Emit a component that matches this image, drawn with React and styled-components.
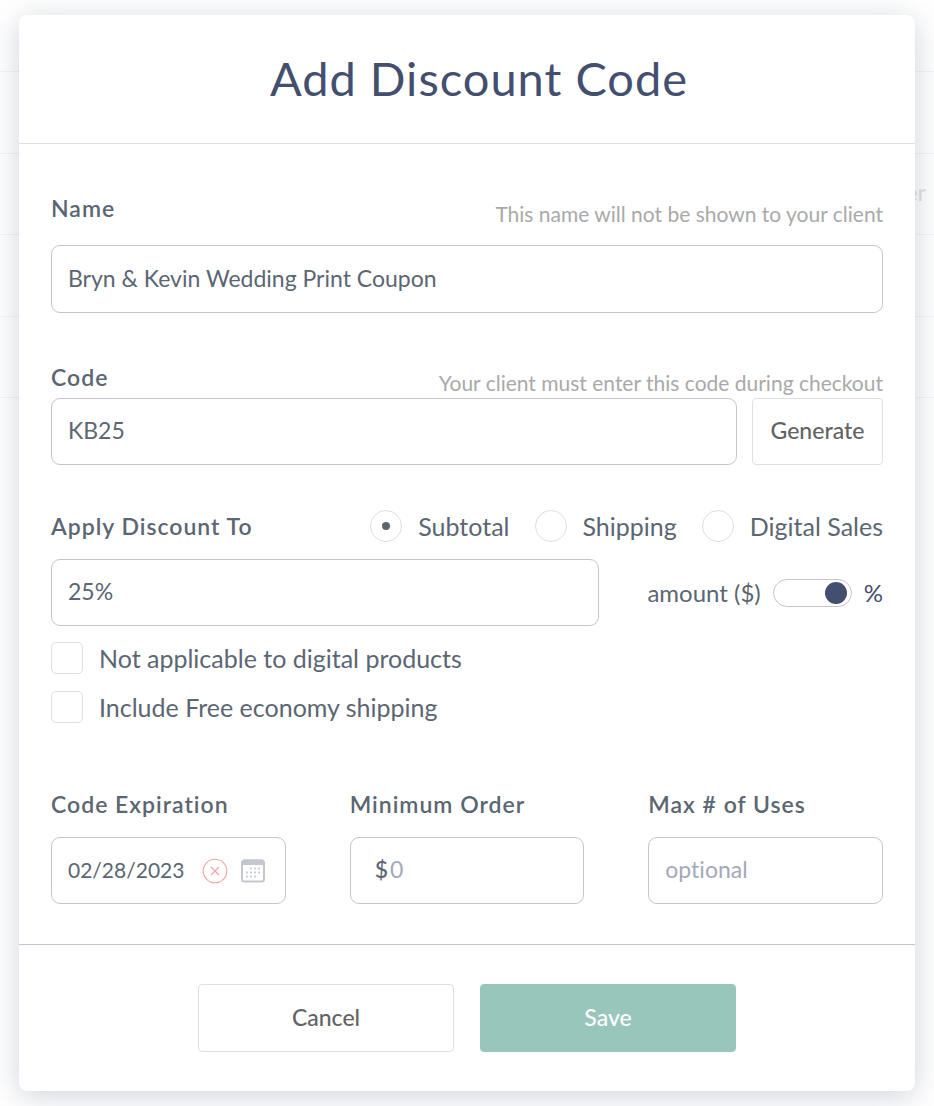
import React, { useState } from 'react'
import styled, { createGlobalStyle } from 'styled-components'

const colors = {
  navy: '#434f6f',
  text: '#5b6673',
  hint: '#a9a9a9',
  button: '#636363',
  border: '#c5c5cf',
  lightBorder: '#dedfe1',
  placeholder: '#a3a9bb',
  green: '#98c6bb',
  danger: '#f4a3a3',
}

const targets = ['Subtotal', 'Shipping', 'Digital Sales']

const App = () => {
  const [name, setName] = useState('Bryn & Kevin Wedding Print Coupon')
  const [code, setCode] = useState('KB25')
  const [target, setTarget] = useState('Subtotal')
  const [discount, setDiscount] = useState('25%')
  const [percent, setPercent] = useState(true)
  const [expiration, setExpiration] = useState('02/28/2023')

  return (
    <Page>
      <GlobalStyle />
      <Behind aria-hidden="true">
        <BehindRow />
        <BehindRow />
        <BehindRow>er</BehindRow>
        <BehindRow />
        <BehindRow />
      </Behind>
      <Modal role="dialog" aria-labelledby="modal-title">
        <Header>
          <Title id="modal-title">Add Discount Code</Title>
        </Header>

        <Body>
          <FieldHead $gap={16}>
            <Label htmlFor="name">Name</Label>
            <Hint>This name will not be shown to your client</Hint>
          </FieldHead>
          <TextInput id="name" $tall value={name} onChange={(e) => setName(e.target.value)} />

          <Section>
            <FieldHead>
              <Label htmlFor="code">Code</Label>
              <Hint>Your client must enter this code during checkout</Hint>
            </FieldHead>
            <CodeRow>
              <TextInput id="code" value={code} onChange={(e) => setCode(e.target.value)} />
              <GenerateButton type="button">Generate</GenerateButton>
            </CodeRow>
          </Section>

          <Section>
            <ApplyRow>
              <Label htmlFor="discount">Apply Discount To</Label>
              <RadioGroup>
                {targets.map((item) => (
                  <Choice key={item}>
                    <Radio
                      type="radio"
                      name="target"
                      checked={target === item}
                      onChange={() => setTarget(item)}
                    />
                    {item}
                  </Choice>
                ))}
              </RadioGroup>
            </ApplyRow>
            <DiscountRow>
              <TextInput id="discount" value={discount} onChange={(e) => setDiscount(e.target.value)} />
              <SwitchLabel>
                amount ($)
                <Switch
                  type="checkbox"
                  role="switch"
                  checked={percent}
                  onChange={() => setPercent(!percent)}
                />
                <Percent>%</Percent>
              </SwitchLabel>
            </DiscountRow>
            <CheckList>
              <Choice>
                <Checkbox type="checkbox" />
                Not applicable to digital products
              </Choice>
              <Choice>
                <Checkbox type="checkbox" />
                Include Free economy shipping
              </Choice>
            </CheckList>
          </Section>

          <Limits>
            <LimitField>
              <Label htmlFor="expiration">Code Expiration</Label>
              <InputBox>
                <BareInput
                  id="expiration"
                  $small
                  value={expiration}
                  onChange={(e) => setExpiration(e.target.value)}
                />
                <IconButton type="button" aria-label="Clear date" onClick={() => setExpiration('')}>
                  <ClearIcon />
                </IconButton>
                <IconButton type="button" aria-label="Open calendar">
                  <CalendarIcon />
                </IconButton>
              </InputBox>
            </LimitField>
            <LimitField>
              <Label htmlFor="minimum">Minimum Order</Label>
              <InputBox $indent>
                <Currency>$</Currency>
                <BareInput id="minimum" placeholder="0" />
              </InputBox>
            </LimitField>
            <LimitField>
              <Label htmlFor="uses">Max # of Uses</Label>
              <TextInput id="uses" placeholder="optional" />
            </LimitField>
          </Limits>
        </Body>

        <Footer>
          <FooterButton type="button">Cancel</FooterButton>
          <FooterButton type="button" $primary>Save</FooterButton>
        </Footer>
      </Modal>
    </Page>
  )
}

export default App

const ClearIcon = () => (
  <svg width="26" height="26" viewBox="0 0 26 26" fill="none" stroke={colors.danger}>
    <circle cx="13" cy="13" r="11.8" strokeWidth="1.1" />
    <path d="M9 9l8 8M17 9l-8 8" strokeWidth="1.1" />
  </svg>
)

const dots = [
  [10, 9.5], [14, 9.5], [18, 9.5],
  [6, 13.5], [10, 13.5], [14, 13.5], [18, 13.5],
  [6, 17.5], [10, 17.5], [14, 17.5],
]

const CalendarIcon = () => (
  <svg width="24" height="24" viewBox="0 0 24 24">
    <rect x="1" y="1.5" width="22" height="21" rx="2.5" fill="none" stroke="#c5c7cf" strokeWidth="2" />
    <path d="M0.5 3.5a3 3 0 0 1 3-3h17a3 3 0 0 1 3 3V6H0.5z" fill="#c5c7cf" />
    {dots.map(([x, y]) => (
      <rect key={`${x}-${y}`} x={x - 1} y={y - 1} width="2" height="2" fill="#cfd1d8" />
    ))}
  </svg>
)

const GlobalStyle = createGlobalStyle`
  * {
    box-sizing: border-box;
  }
  body {
    margin: 0;
    background: #ffffff;
    color: ${colors.text};
    font-family: Lato, 'Open Sans', sans-serif;
    font-size: 23px;
    font-variant-ligatures: none;
  }
  input, button {
    font: inherit;
    font-variant-ligatures: none;
    margin: 0;
  }
`

const Page = styled.div`
  position: relative;
  overflow: hidden;
  padding: 15px 19px;
`

/* the list that stays visible around the dialog */
const Behind = styled.div`
  position: absolute;
  inset: 0;
`

const BehindRow = styled.div`
  display: flex;
  align-items: center;
  justify-content: flex-end;
  height: 81px;
  padding: 0 8px 4px 0;
  border-bottom: 1px solid #f4f4f6;
  color: #dfe0e3;

  &:nth-child(even) {
    height: 82px;
  }

  &:first-child {
    height: 72px;
  }
`

const Modal = styled.div`
  position: relative;
  background: #ffffff;
  border-radius: 8px;
  box-shadow: 0 5px 30px rgba(67, 79, 111, 0.25);
`

const Header = styled.div`
  display: flex;
  justify-content: center;
  align-items: center;
  height: 129px;
  padding: 0 0 2px 24px;
  border-bottom: 1px solid ${colors.lightBorder};
`

const Title = styled.h1`
  margin: 0;
  font-size: 47px;
  line-height: 56px;
  font-weight: 400;
  letter-spacing: 1px;
  color: ${colors.navy};
`

const Body = styled.div`
  padding: 48px 32px 40px;
`

const Section = styled.section`
  margin-top: 48px;
`

const FieldHead = styled.div`
  display: flex;
  justify-content: space-between;
  height: 37px;
  margin-bottom: ${(props) => props.$gap || 0}px;
`

const Label = styled.label`
  font-weight: 600;
  line-height: 32px;
  letter-spacing: 1px;
  white-space: nowrap;
`

const Hint = styled.span`
  align-self: flex-end;
  font-size: 21px;
  line-height: 30px;
  color: ${colors.hint};
`

const TextInput = styled.input`
  display: block;
  flex: 1;
  width: 100%;
  min-width: 0;
  height: ${(props) => (props.$tall ? 68 : 67)}px;
  padding: 0 16px 3px;
  border: 1px solid ${colors.border};
  border-radius: 9px;
  background: #ffffff;
  color: ${colors.text};
  outline: none;

  &::placeholder {
    color: ${colors.placeholder};
    opacity: 1;
  }
`

const CodeRow = styled.div`
  display: flex;
  gap: 15px;
`

const Button = styled.button`
  padding: 0 0 3px;
  border: 1px solid ${colors.lightBorder};
  border-radius: 4px;
  background: #ffffff;
  color: ${colors.button};
  font-weight: 500;
  cursor: pointer;
`

const GenerateButton = styled(Button)`
  width: 131px;
`

const ApplyRow = styled.div`
  display: flex;
  justify-content: space-between;
  margin: -3px 0 17px;
`

const RadioGroup = styled.div`
  display: flex;
  gap: 25px;
`

const Choice = styled.label`
  display: flex;
  align-items: center;
  gap: 16px;
  font-size: 25px;
  line-height: 32px;
`

const Radio = styled.input`
  appearance: none;
  display: grid;
  place-items: center;
  width: 32px;
  height: 32px;
  border: 1px solid ${colors.lightBorder};
  border-radius: 50%;

  &:checked::before {
    content: '';
    width: 8px;
    height: 8px;
    border-radius: 50%;
    background: ${colors.text};
  }
`

const Checkbox = styled.input`
  appearance: none;
  width: 32px;
  height: 32px;
  border: 1px solid ${colors.lightBorder};
  border-radius: 5px;

  &:checked {
    background: ${colors.navy};
  }
`

const DiscountRow = styled.div`
  display: flex;
  align-items: center;
  gap: 48px;
`

const SwitchLabel = styled.label`
  display: flex;
  align-items: center;
  gap: 12px;
  font-size: 24px;
  line-height: 32px;
`

const Switch = styled.input`
  appearance: none;
  display: flex;
  align-items: center;
  justify-content: flex-start;
  width: 79px;
  height: 28px;
  padding: 0 4px;
  border: 1px solid ${colors.border};
  border-radius: 14px;

  &::before {
    content: '';
    width: 22px;
    height: 22px;
    border-radius: 50%;
    background: ${colors.navy};
  }

  &:checked {
    justify-content: flex-end;
  }
`

const Percent = styled.span`
  color: ${colors.navy};
`

const CheckList = styled.div`
  display: flex;
  flex-direction: column;
  gap: 17px;
  margin-top: 16px;
`

const Limits = styled.div`
  display: grid;
  grid-template-columns: repeat(3, 1fr);
  gap: 64px;
  margin-top: 65px;
`

const LimitField = styled.div`
  display: flex;
  flex-direction: column;
  gap: 17px;
  min-width: 0;

  & > input {
    flex: none;
  }
`

const InputBox = styled.div`
  display: flex;
  align-items: center;
  height: 67px;
  padding: 0 20px 0 ${(props) => (props.$indent ? 24 : 16)}px;
  border: 1px solid ${colors.border};
  border-radius: 9px;
`

const BareInput = styled.input`
  flex: 1;
  width: 100%;
  min-width: 0;
  padding: 0 0 3px;
  border: 0;
  background: transparent;
  color: ${colors.text};
  font-size: ${(props) => (props.$small ? 21 : 23)}px;
  outline: none;

  &::placeholder {
    color: ${colors.placeholder};
    opacity: 1;
  }
`

const Currency = styled.span`
  padding-bottom: 3px;
  margin-right: 2px;
  font-weight: 500;
`

const IconButton = styled.button`
  display: flex;
  padding: 0;
  border: 0;
  background: none;
  cursor: pointer;

  & + & {
    margin-left: 13px;
  }
`

const Footer = styled.div`
  display: flex;
  justify-content: center;
  gap: 26px;
  padding: 39px 32px;
  border-top: 1px solid ${colors.border};
`

const FooterButton = styled(Button)`
  width: 256px;
  height: 68px;
  border-color: ${(props) => (props.$primary ? colors.green : colors.lightBorder)};
  background: ${(props) => (props.$primary ? colors.green : '#ffffff')};
  color: ${(props) => (props.$primary ? '#ffffff' : colors.button)};
`
